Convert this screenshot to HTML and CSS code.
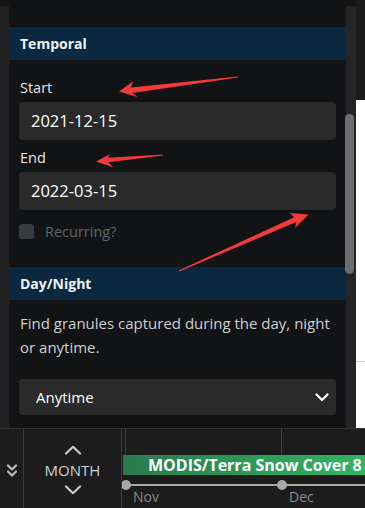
FILE: index.html
```html
<!DOCTYPE html>
<html lang="en">
<head>
<meta charset="UTF-8">
<meta name="viewport" content="width=device-width, initial-scale=1.0">
<title>Granule Filters</title>
<link rel="stylesheet" href="styles.css">
</head>
<body>

<div class="main">
<div class="gutter"></div>

<!-- Filter Panel -->
<div class="panel">
<div class="section-head">Temporal</div>
<div class="section-body">
<label class="field-label">Start</label>
<div class="text-input">2021-12-15</div>
<label class="field-label">End</label>
<div class="text-input">2022-03-15</div>
<div class="check-row">
<span class="check-box"></span>
<span class="check-text">Recurring?</span>
</div>
</div>

<div class="section-head">Day/Night</div>
<div class="section-body">
<p class="help-text">Find granules captured during the day, night or anytime.</p>
<div class="select-box">
<span>Anytime</span>
<svg width="14" height="9" viewBox="0 0 14 9"><path d="M1.5 1.5 L7 7 L12.5 1.5" fill="none" stroke="#fff" stroke-width="2.2" stroke-linecap="round" stroke-linejoin="round"/></svg>
</div>
</div>
</div>

<div class="scroll-track"><div class="scroll-thumb"></div></div>
<div class="side"><div class="side-page"></div></div>
</div>

<!-- Timeline -->
<div class="timeline">
<div class="tl-toggle">
<svg width="12" height="16" viewBox="0 0 12 16"><path d="M2 2.5 L6 6.5 L10 2.5 M2 8.5 L6 12.5 L10 8.5" fill="none" stroke="#bbb" stroke-width="2.2" stroke-linecap="round" stroke-linejoin="round"/></svg>
</div>
<div class="tl-zoom">
<svg width="18" height="10" viewBox="0 0 18 10"><path d="M2 8.5 L9 1.8 L16 8.5" fill="none" stroke="#ccc" stroke-width="2.2" stroke-linecap="round" stroke-linejoin="round"/></svg>
<div class="tl-zoom-label">MONTH</div>
<svg width="18" height="10" viewBox="0 0 18 10"><path d="M2 1.5 L9 8.2 L16 1.5" fill="none" stroke="#ccc" stroke-width="2.2" stroke-linecap="round" stroke-linejoin="round"/></svg>
</div>
<div class="tl-track">
<div class="tick" style="left: 3px"></div>
<div class="tick" style="left: 159px"></div>
<div class="tl-bar">MODIS/Terra Snow Cover 8</div>
<div class="tl-axis">
<span class="dot" style="left: 0px"></span>
<span class="dot" style="left: 156px"></span>
<span class="month" style="left: 7px">Nov</span>
<span class="month" style="left: 163px">Dec</span>
</div>
</div>
</div>

<!-- Annotation arrows -->
<svg class="arrows" width="365" height="508" viewBox="0 0 365 508">
<polygon points="119,91.5 133.5,81 130.8,87.6 237.9,76.4 238.1,77.6 132.6,93 137.5,97" />
<polygon points="96,161.5 110.5,154 107.8,157.8 162.9,154.4 163.1,155.6 108.2,162.2 113.5,167.5" />
<polygon points="308.5,214.5 290,213 294.2,217.3 178.7,270.4 179.3,271.6 296.3,222 295,228" />
</svg>

</body>
</html>
```

FILE: styles.css
```css
* {
margin: 0;
padding: 0;
box-sizing: border-box;
font-family: "Open Sans", "Noto Sans", sans-serif;
}

body {
width: 365px;
height: 508px;
overflow: hidden;
background: #141414;
color: #e8e8e8;
position: relative;
}

.main {
display: flex;
height: 428px;
}

.gutter {
width: 9px;
margin-top: 6px;
background: #202022;
}

/* Filter panel */
.panel {
width: 337px;
background: #121315;
padding-top: 27px;
overflow: hidden;
}

.section-head {
background: #0a2940;
color: #f2f2f2;
font-size: 14px;
font-weight: bold;
height: 33px;
line-height: 33px;
padding-left: 11px;
}

.section-body {
padding: 18px 10px 26px 10px;
}

.field-label {
display: block;
font-size: 14.5px;
color: #e6e6e6;
margin-left: 1px;
line-height: 20px;
margin-bottom: 4px;
}

.text-input {
height: 38px;
line-height: 38px;
background: #2a2a2b;
border-radius: 4px;
padding-left: 12px;
font-size: 16.5px;
color: #fff;
margin-bottom: 8px;
}

.check-row {
display: flex;
align-items: center;
gap: 11px;
margin-top: 12px;
}

.check-box {
width: 15px;
height: 15px;
background: #3a3b3d;
border-radius: 3px;
}

.check-text {
font-size: 14.5px;
color: #60656b;
}

.help-text {
font-size: 15px;
line-height: 24px;
color: #cfcfcf;
padding: 0 6px 0 1px;
margin-top: -7px;
}

.select-box {
margin-top: 20px;
height: 36px;
background: #2a2a2b;
border-radius: 4px;
display: flex;
align-items: center;
justify-content: space-between;
padding: 0 7px 0 17px;
font-size: 15px;
color: #fff;
}

/* Scrollbar */
.scroll-track {
width: 10px;
margin-top: 6px;
background: #252527;
position: relative;
}

.scroll-thumb {
position: absolute;
left: -1px;
top: 108px;
width: 9px;
height: 160px;
border-radius: 5px;
background: #6c6c70;
}

.side {
width: 9px;
padding-top: 100px;
background: #1a1a1a;
}

.side-page {
height: 328px;
background: linear-gradient(#fff 0, #fff 261px, #d4d4d4 261px, #d4d4d4 262px, #fff 262px);
}

/* Timeline */
.timeline {
height: 80px;
display: flex;
background: #1c1c1c;
border-top: 1px solid #333;
}

.tl-toggle {
width: 24px;
border-right: 1px solid #3a3a3a;
display: flex;
align-items: center;
justify-content: center;
padding-top: 5px;
}

.tl-zoom {
width: 98px;
border-right: 1px solid #3a3a3a;
display: flex;
flex-direction: column;
align-items: center;
justify-content: center;
gap: 5px;
padding-top: 3px;
}

.tl-zoom-label {
font-size: 15px;
color: #cfcfcf;
line-height: 20px;
}

.tl-track {
flex: 1;
position: relative;
padding-top: 26px;
overflow: hidden;
}

.tick {
position: absolute;
top: 0;
width: 1px;
height: 26px;
background: #3e3e3e;
}

.tl-bar {
height: 20px;
line-height: 20px;
background: linear-gradient(90deg, #2a7a4c, #2fb664);
color: #fff;
font-size: 16px;
font-weight: bold;
white-space: nowrap;
padding-left: 25px;
margin-left: 1px;
overflow: hidden;
}

.tl-axis {
position: relative;
margin-top: 9px;
margin-left: 4px;
height: 2px;
background: #a8a8a8;
}

.dot {
position: absolute;
top: -4px;
width: 10px;
height: 10px;
margin-left: -5px;
border-radius: 50%;
background: #a8a8a8;
}

.month {
position: absolute;
top: 3px;
font-size: 14px;
color: #8a8a8a;
}

/* Annotation arrows */
.arrows {
position: absolute;
left: 0;
top: 0;
}

.arrows polygon {
fill: #f23a3a;
}
```
